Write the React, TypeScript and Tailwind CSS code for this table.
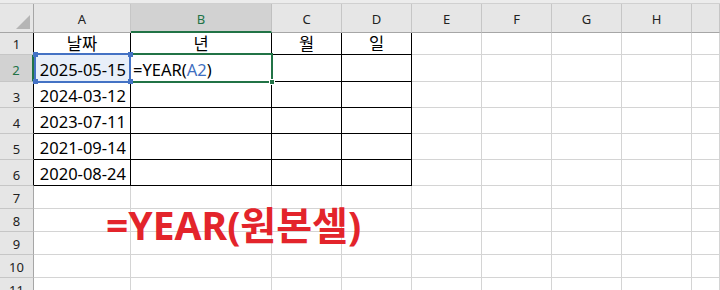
const cols = ['A', 'B', 'C', 'D', 'E', 'F', 'G', 'H', ''];
const rows = [1, 2, 3, 4, 5, 6, 7, 8, 9, 10, 11];

const headings = ['날짜', '년', '월', '일'];
const dates = ['2025-05-15', '2024-03-12', '2023-07-11', '2021-09-14', '2020-08-24'];

function Corner({ x, y }: { x: number; y: number }) {
  return (
    <div
      className="absolute w-[5px] h-[5px] bg-[#4472c4]"
      style={{ left: x - 2, top: y - 2 }}
    />
  );
}

function Cell({ r, c }: { r: number; c: number }) {
  const inTable = r <= 6 && c <= 3;
  const border = inTable ? 'border-black' : 'border-[#d4d4d4]';
  const bg = r === 2 && c === 0 ? 'bg-[#e8eff9]' : 'bg-white';

  let content: React.ReactNode = null;
  let align = 'justify-start';
  if (r === 1 && c <= 3) {
    content = headings[c];
    align = 'justify-center';
  } else if (r >= 2 && r <= 6 && c === 0) {
    content = dates[r - 2];
    align = 'justify-end pr-[4px]';
  } else if (r === 2 && c === 1) {
    content = (
      <>
        =YEAR(<span className="text-[#3f6fc0]">A2</span>)
      </>
    );
    align = 'justify-start pl-[2px]';
  }

  return (
    <div
      className={`flex items-end ${r === 1 ? 'pb-[1px]' : 'pb-[2px]'} border-r border-b ${border} ${bg} ${align} text-[16.5px] leading-[19px] text-black whitespace-nowrap`}
    >
      {content}
    </div>
  );
}

export default function App() {
  return (
    <div className="relative w-[720px] h-[290px] overflow-hidden bg-white font-['Noto_Sans','Noto_Sans_CJK_KR',sans-serif]">
      <div className="h-[4px] bg-[#ececec] border-b border-[#d0d0d0]" />
      <div className="grid grid-cols-[34px_97px_141px_70px_70px_70px_70px_70px_70px_1fr] grid-rows-[29px_22px_27px_26px_26px_26px_26px_23px_23px_23px_23px_23px]">
        {/* corner */}
        <div className="relative bg-[#e6e6e6] border-r border-b border-[#a6a6a6]">
          <svg className="absolute right-[3px] bottom-[3px]" width="14" height="14" viewBox="0 0 14 14">
            <polygon points="14,0 14,14 0,14" fill="#b5b5b5" />
          </svg>
        </div>
        {cols.map((l, i) =>
          i === 1 ? (
            <div
              key={i}
              className="flex items-end justify-center pb-[4px] bg-[#d2d2d2] border-r border-[#c0c0c0] border-b-2 border-b-[#217346] text-[13px] leading-[16px] text-[#217346]"
            >
              {l}
            </div>
          ) : (
            <div
              key={i}
              className="flex items-end justify-center pb-[5px] bg-[#e6e6e6] border-r border-[#c6c6c6] border-b border-b-[#a6a6a6] text-[13px] leading-[16px] text-[#222]"
            >
              {l}
            </div>
          )
        )}
        {rows.map((r) => (
          <div key={r} className="contents">
            {r === 2 ? (
              <div className="flex items-end justify-center pb-[3px] bg-[#d2d2d2] border-b border-[#c6c6c6] border-r-2 border-r-[#217346] text-[13px] leading-[16px] text-[#217346]">
                {r}
              </div>
            ) : r <= 6 ? (
              <div className="flex items-end justify-center pb-[2px] bg-[#e6e6e6] border-b border-[#c6c6c6] border-r border-r-black text-[13px] leading-[16px] text-[#222]">
                {r}
              </div>
            ) : (
              <div className="flex items-end justify-center pb-[2px] bg-[#e6e6e6] border-b border-[#c6c6c6] border-r border-r-[#a6a6a6] text-[13px] leading-[16px] text-[#222]">
                {r}
              </div>
            )}
            {cols.map((_, c) => (
              <Cell key={c} r={r} c={c} />
            ))}
          </div>
        ))}
      </div>

      {/* active cell B2 */}
      <div className="absolute left-[129px] top-[53px] w-[144px] h-[30px] border-2 border-[#217346]" />
      <div className="absolute left-[269px] top-[79px] w-[6px] h-[6px] bg-[#217346] border border-white" />

      {/* referenced cell A2 */}
      <div className="absolute left-[34px] top-[53px] w-[97px] h-[30px] border-2 border-[#4472c4]" />
      <Corner x={35} y={54} />
      <Corner x={130} y={54} />
      <Corner x={35} y={81} />
      <Corner x={130} y={81} />

      <div className="absolute left-[106px] top-[205px] text-[39px] leading-none font-bold text-[#e3242b] whitespace-nowrap">
        =YEAR(원본셀)
      </div>
    </div>
  );
}
